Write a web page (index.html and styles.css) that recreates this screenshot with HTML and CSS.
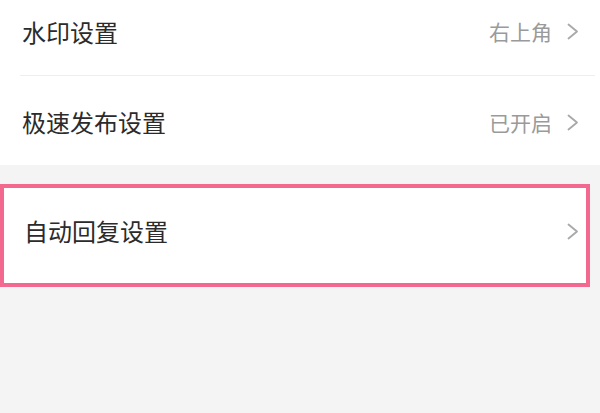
FILE: index.html
```html
<!DOCTYPE html>
<html lang="zh-CN">
<head>
<meta charset="utf-8">
<link rel="stylesheet" href="styles.css">
</head>
<body>
<div class="group">
  <div class="row row-first">
    <span class="label">水印设置</span>
    <span class="value">右上角</span>
    <svg class="chev" width="12" height="17" viewBox="0 0 12 17"><polyline points="1.5,1.5 10,8.5 1.5,15.5" /></svg>
  </div>
  <div class="divider"></div>
  <div class="row row-second">
    <span class="label">极速发布设置</span>
    <span class="value">已开启</span>
    <svg class="chev" width="12" height="17" viewBox="0 0 12 17"><polyline points="1.5,1.5 10,8.5 1.5,15.5" /></svg>
  </div>
</div>
<div class="highlight">
  <div class="row row-third">
    <span class="label">自动回复设置</span>
    <svg class="chev" width="12" height="17" viewBox="0 0 12 17"><polyline points="1.5,1.5 10,8.5 1.5,15.5" /></svg>
  </div>
</div>
</body>
</html>
```

FILE: styles.css
```css
html, body {
  margin: 0;
  padding: 0;
  background: #f4f4f4;
  width: 600px;
  height: 413px;
  overflow: hidden;
  font-family: "Noto Sans CJK SC", "Noto Sans", sans-serif;
}
.group {
  background: #ffffff;
}
.row {
  display: flex;
  align-items: center;
  box-sizing: border-box;
  padding-left: 22px;
  padding-right: 21px;
}
.row-first {
  height: 75px;
  padding-bottom: 12px;
}
.row-second {
  height: 89px;
  padding-top: 3px;
}
.divider {
  height: 1px;
  margin-left: 20px;
  margin-right: 5px;
  background: #eeeeee;
}
.label {
  flex: 1;
  font-size: 24px;
  color: #2b2b2b;
  line-height: 1;
}
.value {
  font-size: 21px;
  color: #9a9a9a;
  line-height: 1;
  margin-right: 15px;
}
.chev polyline {
  fill: none;
  stroke: #a8a8a8;
  stroke-width: 1.8;
  stroke-linecap: round;
  stroke-linejoin: round;
}
.highlight {
  margin-top: 19px;
  width: 590px;
  box-sizing: border-box;
  border: 4px solid #f2688f;
  background: #ffffff;
}
.row-third {
  height: 95px;
  padding-left: 20px;
  padding-right: 7px;
  padding-bottom: 9px;
}
```
